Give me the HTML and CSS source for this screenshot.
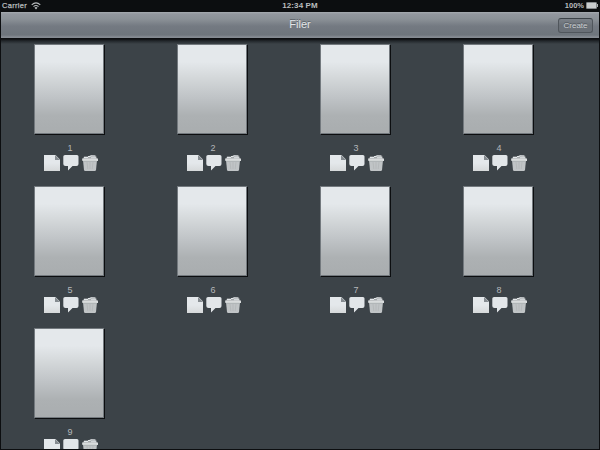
FILE: index.html
```
<!DOCTYPE html>
<html lang="en">
<head>
<meta charset="utf-8">
<title>Filer</title>
<link rel="stylesheet" href="styles.css">
</head>
<body>
<svg class="defs" aria-hidden="true">
  <defs>
    <linearGradient id="pale" x1="0" y1="0" x2="0" y2="1">
      <stop offset=".5" stop-color="#e4e8eb"/><stop offset="1" stop-color="#d6d9da"/>
    </linearGradient>
    <symbol id="doc" viewBox="0 0 16 16">
      <path d="M0 0H11.5L16 4.5V16H0Z" fill="url(#pale)"/>
      <path d="M11 0L16 5H11Z" fill="#858b90"/>
    </symbol>
    <symbol id="bubble" viewBox="0 0 16 16">
      <path d="M2 0H14Q15.5 0 15.5 1.5V9Q15.5 11 13.5 11H9.5L5 15.5V11H2.5Q.3 11 .3 9V1.5Q.3 0 2 0Z" fill="#e2e6e9"/>
    </symbol>
    <symbol id="trash" viewBox="0 0 16 16">
      <path d="M1 4L2 1.5L6.5 1.6L8 .4H14L15 4Z" fill="#a4a8aa"/>
      <path d="M6 1.5H8L9 .8L13 1M2 2.5H6M9 2.8H14" stroke="#e4e8eb" fill="none"/>
      <path d="M1 5H15L14 15Q13.8 16 12.8 16H3.2Q2.2 16 2 15Z" fill="#c0c4c6"/>
      <path d="M5 7L5.8 14M8 7V14M11 7L10.2 14" stroke="#b2b6b8" stroke-width=".8"/>
      <path d="M0 3.6H16V6H.4Z" fill="#d9dcdd"/>
      <path d="M1.5 6.3H14.5" stroke="#a6aaac" stroke-width=".7"/>
    </symbol>
  </defs>
</svg>
<div class="screen">
  <div class="status">
    <div class="carrier">Carrier
      <svg class="wifi" viewBox="0 0 10 8"><path d="M.7 2.8Q5-1 9.3 2.8M2.5 4.6Q5 2.4 7.5 4.6" fill="none" stroke="#b9bdbf" stroke-width="1.1"/><path d="M3.5 5.7Q5 4.5 6.5 5.7L5 7.5Z" fill="#b9bdbf"/></svg>
    </div>
    <div class="clock">12:34 PM</div>
    <div class="power">100%
      <svg class="battery" viewBox="0 0 12 7"><rect x=".5" y=".5" width="10" height="6" rx=".6" fill="#c9cccd" stroke="#85898c"/><path d="M11 2H12V5H11Z" fill="#b0b4b6"/></svg>
    </div>
  </div>
  <header class="toolbar">
    <span></span>
    <h1>Filer</h1>
    <button class="create">Create</button>
  </header>
  <main class="files">
    <div class="file"><div class="page"></div><div class="name">1</div><div class="actions"><svg><use href="#doc"/></svg><svg><use href="#bubble"/></svg><svg><use href="#trash"/></svg></div></div>
    <div class="file"><div class="page"></div><div class="name">2</div><div class="actions"><svg><use href="#doc"/></svg><svg><use href="#bubble"/></svg><svg><use href="#trash"/></svg></div></div>
    <div class="file"><div class="page"></div><div class="name">3</div><div class="actions"><svg><use href="#doc"/></svg><svg><use href="#bubble"/></svg><svg><use href="#trash"/></svg></div></div>
    <div class="file"><div class="page"></div><div class="name">4</div><div class="actions"><svg><use href="#doc"/></svg><svg><use href="#bubble"/></svg><svg><use href="#trash"/></svg></div></div>
    <div class="file"><div class="page"></div><div class="name">5</div><div class="actions"><svg><use href="#doc"/></svg><svg><use href="#bubble"/></svg><svg><use href="#trash"/></svg></div></div>
    <div class="file"><div class="page"></div><div class="name">6</div><div class="actions"><svg><use href="#doc"/></svg><svg><use href="#bubble"/></svg><svg><use href="#trash"/></svg></div></div>
    <div class="file"><div class="page"></div><div class="name">7</div><div class="actions"><svg><use href="#doc"/></svg><svg><use href="#bubble"/></svg><svg><use href="#trash"/></svg></div></div>
    <div class="file"><div class="page"></div><div class="name">8</div><div class="actions"><svg><use href="#doc"/></svg><svg><use href="#bubble"/></svg><svg><use href="#trash"/></svg></div></div>
    <div class="file"><div class="page"></div><div class="name">9</div><div class="actions"><svg><use href="#doc"/></svg><svg><use href="#bubble"/></svg><svg><use href="#trash"/></svg></div></div>
  </main>
</div>
</body>
</html>
```
FILE: styles.css
```
* { box-sizing: border-box; }
body {
  margin: 0;
  background: #0c0e10;
  font-family: "Liberation Sans", Arial, sans-serif;
  overflow: hidden;
}
.defs { position: absolute; width: 0; height: 0; }
.screen {
  height: 450px;
  padding: 0 1px 1px;
  display: flex;
  flex-direction: column;
}
.status {
  flex: none;
  height: 12px;
  padding: 0 1px;
  display: grid;
  grid-template-columns: 1fr auto 1fr;
  color: #b9bdbf;
  font-size: 8px;
  line-height: 11px;
}
.carrier, .power { display: flex; align-items: center; gap: 4px; height: 11px; }
.carrier { font-size: 7.5px; letter-spacing: .3px; -webkit-text-stroke: .25px #b9bdbf; }
.power { justify-content: flex-end; gap: 2px; font-weight: bold; font-size: 7.5px; }
.clock { font-weight: bold; letter-spacing: .1px; }
.wifi { width: 10px; height: 8px; }
.battery { width: 12px; height: 7px; }
.toolbar {
  flex: none;
  height: 27px;
  padding: 0 6px;
  display: grid;
  grid-template-columns: 1fr auto 1fr;
  background: linear-gradient(#a6abb0 0, #92979e 2px, #8b9197 7px, #747a82 14px, #6e757c 23px, #858b92 25px);
  border-bottom: 1px solid #0c0e10;
}
.toolbar h1 {
  margin: 0;
  color: #e2e6e9;
  font-size: 11px;
  font-weight: normal;
  line-height: 25px;
  text-shadow: 0 -1px #5c6268;
}
.create {
  justify-self: end;
  width: 35px;
  height: 15px;
  margin-top: 6px;
  padding: 0;
  border: 1px solid #50565c;
  border-top-color: #3c4248;
  border-radius: 3px;
  background: linear-gradient(#7c8289, #6a7077 50%, #6a7077);
  color: #c8ccd0;
  font: 8px/13px "Liberation Sans", Arial, sans-serif;
  text-shadow: 0 -1px #50565c;
}
.files {
  flex: 1;
  min-height: 0;
  overflow: hidden;
  padding: 5px 0 0 33px;
  display: grid;
  grid-template-columns: repeat(4, 70px);
  grid-auto-rows: 142px;
  column-gap: 73px;
  align-content: start;
  background: linear-gradient(#0c0e10 0, #23282c 2px, #3c4348 5px);
}
.page {
  height: 90px;
  border: 1px solid #73797e;
  background: linear-gradient(#e4e8eb 19%, #d4d8da 37%, #bfc3c6 60%, #adb1b3 80%, #a9adaf);
  box-shadow: 1px 1px #0c0e10;
}
.name {
  padding: 9px 0 0 2px;
  color: #b4b8bb;
  font-size: 9px;
  line-height: 10px;
  text-align: center;
}
.actions {
  padding: 2px 0 0 9.5px;
  display: flex;
  gap: 3px;
}
.actions svg { flex: none; width: 16px; height: 16px; display: block; }
```
